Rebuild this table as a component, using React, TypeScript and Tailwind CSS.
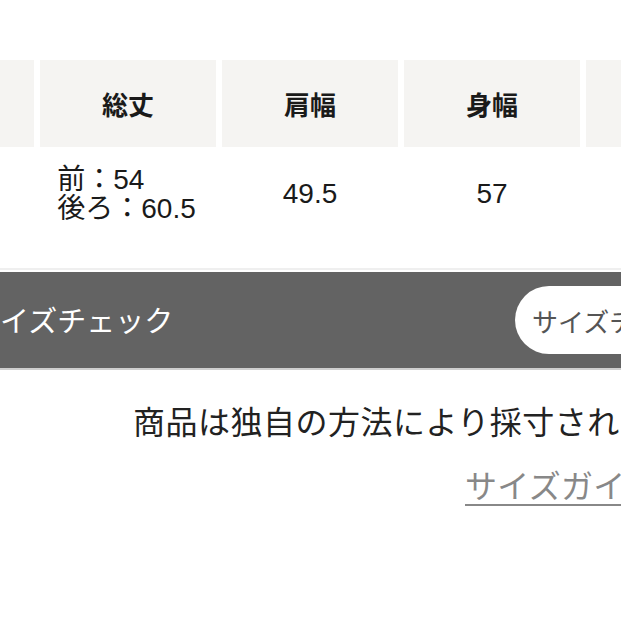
const jp = { fontFamily: '"Noto Sans CJK JP", "Noto Sans", sans-serif' }
const num = { fontFamily: '"Liberation Sans", "Noto Sans CJK JP", sans-serif' }

const headers = ['', '総丈', '肩幅', '身幅', '']

export default function App() {
  return (
    <div
      className="h-[621px] w-[621px] overflow-hidden bg-white text-[#1a1a1a]"
      style={jp}
    >
      <div className="pt-[60px]">
        {/* size table, cut off at both edges */}
        <div className="-ml-[142px] grid w-[1000px] grid-cols-[repeat(5,176px)] gap-x-[6px]">
          {headers.map((h, i) => (
            <div
              key={i}
              className="flex h-[87px] items-center justify-center bg-[#f5f4f2] text-[26px] font-bold leading-none"
            >
              {h}
            </div>
          ))}
          <div className="h-[121px]" />
          <div
            className="flex h-[121px] items-center justify-center pb-[27px] pr-[3px] text-[28px] leading-[29px]"
            style={num}
          >
            <div className="text-left">
              <div>前：54</div>
              <div>後ろ：60.5</div>
            </div>
          </div>
          <div
            className="flex h-[121px] items-center justify-center pb-[27px] text-[28px]"
            style={num}
          >
            49.5
          </div>
          <div
            className="flex h-[121px] items-center justify-center pb-[27px] text-[28px]"
            style={num}
          >
            57
          </div>
          <div className="h-[121px]" />
        </div>
        <div className="h-[2px] bg-[#efefef]" />
        <div className="h-[2px]" />

        {/* size check bar */}
        <div className="flex h-[98px] items-center overflow-hidden border-b-2 border-[#cfcfcf] bg-[#636363]">
          <span className="-ml-[29px] w-[203px] shrink-0 whitespace-nowrap text-[29px] text-white">
            サイズチェック
          </span>
          <div className="ml-[341px] flex h-[68px] shrink-0 items-center rounded-full bg-white pl-[17px] pr-[40px]">
            <span className="whitespace-nowrap text-[26px] text-[#555]">サイズチェックする</span>
          </div>
        </div>

        <p className="mt-[26px] whitespace-nowrap pl-[133px] text-[32px] leading-[48px] tracking-[0.5px] text-[#222]">
          商品は独自の方法により採寸されています。
        </p>
        <a
          href="#"
          className="mt-[20px] block whitespace-nowrap pl-[465px] text-[32px] leading-[40px] tracking-[0.3px] text-[#888] underline decoration-[#888] decoration-[1.5px] underline-offset-[6px]"
        >
          サイズガイドを見る
        </a>
      </div>
    </div>
  )
}
